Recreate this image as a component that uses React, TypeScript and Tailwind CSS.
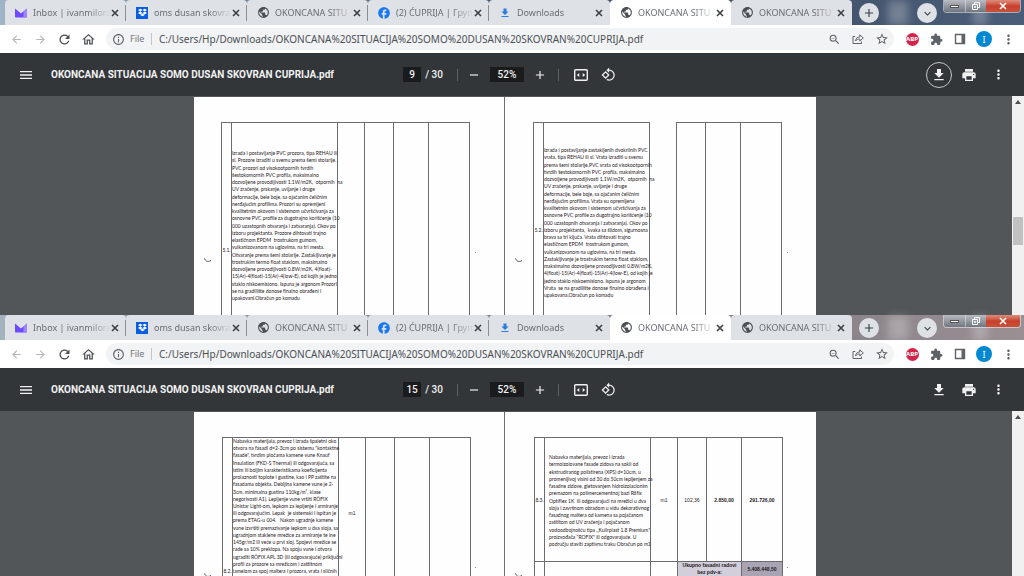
import { useId, useState } from "react";
import type { ReactNode } from "react";
import clsx from "clsx";
import { FaDropbox } from "react-icons/fa";
import {
  MdAdd,
  MdArrowBack,
  MdArrowForward,
  MdFacebook,
  MdInfoOutline,
  MdKeyboardArrowDown,
  MdMenu,
  MdMoreVert,
  MdOutlineHome,
  MdRefresh,
  MdRemove,
  MdRotate90DegreesCcw,
  MdStarBorder,
  MdZoomOut,
} from "react-icons/md";

const FILE_NAME = "OKONCANA SITUACIJA SOMO DUSAN SKOVRAN CUPRIJA.pdf";
const FILE_URL = "C:/Users/Hp/Downloads/" + FILE_NAME.replaceAll(" ", "%20");

const TABS = [
  { icon: "mail", title: "Inbox | ivanmilora" },
  { icon: "dropbox", title: "oms dusan skovra" },
  { icon: "globe", title: "OKONCANA SITU" },
  { icon: "facebook", title: "(2) ĆUPRIJA | Груп" },
  { icon: "download", title: "Downloads" },
  { icon: "globe", title: "OKONCANA SITU" },
  { icon: "globe", title: "OKONCANA SITU" },
];
const ACTIVE_TAB = 5;

const WINDOWS_LINES = [
  "Izrada i postavljanje PVC prozora, tipa REHAU ili",
  "sl. Prozore izraditi u svemu prema šemi stolarije.",
  "PVC prozori od visokootpornih tvrdih",
  "šestokomornih PVC profila, maksimalno",
  "dozvoljene provodljivosti 1.1W/m2K,  otpornih  na",
  "UV zračenje, prskanje, uvijanje i druge",
  "deformacije, bele boje, sa ojačanim čeličnim",
  "nerđajućim profilima. Prozori su opremljeni",
  "kvalitetnim okovom i sistemom učvršćivanja za",
  "osnovne PVC profile za dugotrajno korišćenje (10",
  "000 uzastopnih otvaranja i zatvaranja). Okov po",
  "izboru projektanta. Prozore dihtovati trajno",
  "elastičnom EPDM  trostrukom gumom,",
  "vulkanizovanom na uglovima, na tri mesta.",
  "Otvaranje prema šemi stolarije. Zastakljivanje je",
  "trostrukim termo float staklom, maksimalno",
  "dozvoljene provodljivosti 0.8W/m2K, 4(float)-",
  "15(Ar)-4(float)-15(Ar)-4(low-E), od kojih je jedno",
  "staklo niskoemisiono. Ispuna je argonom Prozori",
  "se na gradilište donose finalno obrađeni i",
  "upakovani.Obračun po komadu",
];

const DOORS_LINES = [
  "Izrada i postavljanje zastakljenih dvokrilnih PVC",
  "vrata, tipa REHAU ili sl. Vrata izraditi u svemu",
  "prema šemi stolarije.PVC vrata od visokootpornih",
  "tvrdih šestokomornih PVC profila, maksimalno",
  "dozvoljene provodljivosti 1.1W/m2K,  otpornih  na",
  "UV zračenje, prskanje, uvijanje i druge",
  "deformacije, bele boje, sa ojačanim čeličnim",
  "nerđajućim profilima. Vrata su opremljena",
  "kvalitetnim okovom i sistemom učvršćivanja za",
  "osnovne PVC profile za dugotrajno korišćenje (10",
  "000 uzastopnih otvaranja i zatvaranja). Okov po",
  "izboru projektanta,  kvaka sa šildom, sigurnosna",
  "brava sa tri ključa. Vrata dihtovati trajno",
  "elastičnom EPDM  trostrukom gumom,",
  "vulkanizovanom na uglovima, na tri mesta.",
  "Zastakljivanje je trostrukim termo float staklom,",
  "maksimalno dozvoljene provodljivosti 0.8W/m2K,",
  "4(float)-15(Ar)-4(float)-15(Ar)-4(low-E), od kojih je",
  "jedno staklo niskoemisiono. Ispuna je argonom",
  "Vrata  se na gradilište donose finalno obrađena i",
  "upakovana.Obračun po komadu",
];

const FACADE_LINES = [
  "Nabavka materijala, prevoz i izrada špaletni oko",
  "otvora na fasadi d=2-3cm po sistemu \"kontaktne",
  "fasade\", tvrdim pločama kamene vune Knauf",
  "Insulation (FKD-S Thermal) ili odgovarajuća, sa",
  "istim ili boljim karakteristikama koeficijenta",
  "prolaznosti toplote i gustine, kao i PP zaštite na",
  "fasadama objekta. Debljina kamene vune je 2-",
  "3cm, minimalna gustina 110kg/m³, klase",
  "negorivosti A1). Lepljenje vune vršiti RÖFIX",
  "Unistar Light-om, lepkom za lepljenje i armiranje",
  "ili odgovarajućim. Lepak  je sistemski i ispitan je",
  "prema ETAG-u 004.   Nakon ugradnje kamene",
  "vune izvršiti premazivanje lepkom u dva sloja, sa",
  "ugradnjom staklene mrežice za armiranje te ine",
  "145gr/m2 ili veće u prvi sloj. Spojevi mrežice se",
  "rade sa 10% preklopa. Na spoju vune i otvora",
  "ugraditi RÖFIX APL 3D (ili odgovarajuće) priključni",
  "profil za prozore sa mrežicom i zaštitnom",
  "lamelom za spoj maltera i prozora, vrata i sličnih",
];

const PLINTH_LINES = [
  "Nabavka materijala, prevoz i izrada",
  "termoizolovane fasade zidova na sokli od",
  "ekstrudiranog polistirena (XPS) d=10cm, u",
  "promenljivoj visini od 30 do 50cm lepljenjem za",
  "fasadne zidove, gletovanjem hidroizolacionim",
  "premazom na polimercementnoj bazi Röfix",
  "Optiflex 1K  ili odgovarajući na mrežici u dva",
  "sloja i završnom obradom u vidu dekorativnog",
  "fasadnog maltera od kamena sa pojačanom",
  "zaštitom od UV zračenja i pojačanom",
  "vodoodbojnošću tipa ,,Kulirplast 1.8 Premium\"",
  "proizvođača \"ROFIX\" ili odgovarajuće. U",
  "području staviti zaptivnu traku Obračun po m1",
];

function Glyph({ d, className }: { d: string; className: string }) {
  return (
    <svg viewBox="0 0 24 24" className={className} fill="currentColor">
      <path d={d} />
    </svg>
  );
}

const DOWNLOAD = "M19 9h-4V3H9v6H5l7 7 7-7zM5 18v2h14v-2H5z";
const PRINT =
  "M19 8H5c-1.66 0-3 1.34-3 3v6h4v4h12v-4h4v-6c0-1.66-1.34-3-3-3zm-3 11H8v-5h8v5zm3-7c-.55 0-1-.45-1-1s.45-1 1-1 1 .45 1 1-.45 1-1 1zm-1-9H6v4h12V3z";
const PUZZLE =
  "M20.5 11H19V7c0-1.1-.9-2-2-2h-4V3.5C13 2.12 11.88 1 10.5 1S8 2.12 8 3.5V5H4c-1.1 0-1.99.9-1.99 2v3.8H3.5c1.49 0 2.7 1.21 2.7 2.7s-1.21 2.7-2.7 2.7H2V20c0 1.1.9 2 2 2h3.8v-1.5c0-1.49 1.21-2.7 2.7-2.7 1.49 0 2.7 1.21 2.7 2.7V22H17c1.1 0 2-.9 2-2v-4h1.5c1.38 0 2.5-1.12 2.5-2.5S21.88 11 20.5 11z";
const GLOBE =
  "M12 2C6.48 2 2 6.48 2 12s4.48 10 10 10 10-4.48 10-10S17.52 2 12 2zm-1 17.93c-3.95-.49-7-3.85-7-7.93 0-.62.08-1.21.21-1.79L9 15v1c0 1.1.9 2 2 2v1.93zm6.9-2.54c-.26-.81-1-1.39-1.9-1.39h-1v-3c0-.55-.45-1-1-1H8v-2h2c.55 0 1-.45 1-1V7h2c1.1 0 2-.9 2-2v-.41c2.93 1.19 5 4.06 5 7.41 0 2.08-.8 3.97-2.1 5.39z";

function CrossIcon({ className }: { className?: string }) {
  return (
    <svg viewBox="0 0 8 8" className={clsx("size-2", className)} fill="none" stroke="currentColor" strokeWidth="1.6">
      <path d="M1 1l6 6M7 1 1 7" />
    </svg>
  );
}

function MailIcon() {
  return (
    <svg viewBox="0 0 12 12" className="size-3">
      <path d="M0 1.5 6 6.5 12 1.5V9.5a1 1 0 0 1-1 1H1a1 1 0 0 1-1-1Z" fill="#6d4aff" />
      <path d="M8.5 4.4 12 1.5V9.5a1 1 0 0 1-1 1H8.5Z" fill="#9b86ff" />
    </svg>
  );
}

function TabIcon({ name }: { name: string }) {
  if (name === "mail") return <MailIcon />;
  if (name === "dropbox") {
    return (
      <span className="flex size-3 items-center justify-center bg-[#0a5fe0] text-white">
        <FaDropbox size={9} />
      </span>
    );
  }
  if (name === "facebook") return <MdFacebook size={14} className="-mx-px text-[#1877f2]" />;
  if (name === "download") return <Glyph d={DOWNLOAD} className="size-3 text-[#2b7de1]" />;
  return <Glyph d={GLOBE} className="size-[13px] text-[#4c4f54]" />;
}

function ShareIcon() {
  return (
    <svg viewBox="0 0 12 12" className="size-3" fill="none" stroke="currentColor">
      <path d="M3.2 3.5H1v7h8.5V8.5" />
      <path d="M3.5 8c.3-2.6 1.8-4 4.3-4V1.8L11.3 5 7.8 8V6C6 6 4.6 6.5 3.5 8Z" strokeLinejoin="round" />
    </svg>
  );
}

function SidePanelIcon() {
  return (
    <svg viewBox="0 0 12 12" className="size-3">
      <path d="M1.5 1.5h9v9h-9z" fill="none" stroke="#5f6368" strokeWidth="1.4" />
      <path d="M7.5 1.5h3v9h-3z" fill="#5f6368" />
    </svg>
  );
}

function FitPageIcon() {
  return (
    <svg viewBox="0 0 14 12" className="h-3 w-3.5">
      <rect x="0.7" y="0.7" width="12.6" height="10.6" rx="1" fill="none" stroke="currentColor" strokeWidth="1.4" />
      <path d="M5.3 4v4L2.8 6ZM8.7 4v4l2.5-2Z" fill="currentColor" />
    </svg>
  );
}

function IconButton({ label, className, children }: { label: string; className?: string; children: ReactNode }) {
  return (
    <button
      aria-label={label}
      className={clsx("flex shrink-0 items-center justify-center", className ?? "size-6")}
    >
      {children}
    </button>
  );
}

function WindowButtons() {
  return (
    <div className="absolute top-0 right-[3px] flex h-[13px] w-[78px] overflow-hidden rounded-b border border-t-0 border-white/50">
      <button
        aria-label="Minimize"
        className="flex w-[22px] items-center justify-center border-r border-white/40 bg-linear-to-b from-[#b9bcc2] to-[#72767e]"
      >
        <span className="h-[3px] w-[9px] border border-[#555] bg-white" />
      </button>
      <button
        aria-label="Restore"
        className="flex w-5 items-center justify-center bg-linear-to-b from-[#b9bcc2] to-[#72767e]"
      >
        <svg viewBox="0 0 10 10" className="size-2.5" fill="none" stroke="#fff">
          <path d="M3.5 3V1.5h5v5H7" />
          <path d="M1.5 3.5h5v5h-5zM3.5 5.5h1v1h-1z" />
        </svg>
      </button>
      <button
        aria-label="Close window"
        className="flex flex-1 items-center justify-center bg-linear-to-b from-[#dc8d7e] via-[#c8402c] to-[#c9503a] text-white"
      >
        <CrossIcon />
      </button>
    </div>
  );
}

function TabStrip({ dark }: { dark?: boolean }) {
  return (
    <div
      className={clsx(
        "relative flex h-[25px] shrink-0 pl-[5px]",
        dark
          ? "bg-linear-to-r from-[#a3b3bd] from-0% via-[#77747b] via-60% to-[#9a9094]"
          : "bg-linear-to-r from-[#9fb4c4] from-0% via-[#3d4a60] via-60% to-[#4a5d78]",
      )}
    >
      <div role="tablist" className="flex">
        {TABS.map((tab, i) => {
          const active = i === ACTIVE_TAB;
          return (
            <div
              key={i}
              role="tab"
              aria-selected={active}
              className={clsx(
                "flex w-[121px] items-center rounded-t-[4px] pl-2.5",
                active ? "bg-white" : "bg-[#dee1e6]",
              )}
            >
              <span className="flex w-[18px] shrink-0 items-center">
                <TabIcon name={tab.icon} />
              </span>
              <span className="flex-1 overflow-hidden text-[9px] leading-3 whitespace-nowrap text-[#6a6d72] [mask-image:linear-gradient(to_right,black_70%,transparent)]">
                {tab.title}
              </span>
              <button aria-label="Close tab" className="text-[#3c4043]">
                <CrossIcon />
              </button>
              <span className={clsx("ml-1.5 h-4 w-px", i < ACTIVE_TAB - 1 && "bg-[#8b8e93]")} />
            </div>
          );
        })}
      </div>
      <div className="flex flex-1 items-center pt-px pl-[7px]">
        <button
          aria-label="New tab"
          className="flex size-5 items-center justify-center rounded-full bg-[#dee1e6] text-[#3c4043]"
        >
          <MdAdd size={14} />
        </button>
        <span className="mx-[9px] h-full w-5 bg-white/25 blur-[4px]" />
        <button
          aria-label="Search tabs"
          className="flex size-5 items-center justify-center rounded-full bg-[#dee1e6] text-[#3c4043]"
        >
          <MdKeyboardArrowDown size={13} />
        </button>
        <span className="ml-9 h-full w-3.5 bg-white/25 blur-[4px]" />
      </div>
      <WindowButtons />
    </div>
  );
}

function AddressBar() {
  const [url, setUrl] = useState(FILE_URL);
  const urlId = useId();

  return (
    <div className="flex h-7 shrink-0 items-center bg-white px-1 text-[#5f6368]">
      <IconButton label="Back" className="size-6 text-[#b4b6b9]">
        <MdArrowBack size={13} />
      </IconButton>
      <IconButton label="Forward" className="size-6 text-[#b4b6b9]">
        <MdArrowForward size={13} />
      </IconButton>
      <IconButton label="Reload" className="size-6 text-[#4c4f54]">
        <MdRefresh size={15} />
      </IconButton>
      <IconButton label="Home" className="size-6 text-[#4c4f54]">
        <MdOutlineHome size={15} />
      </IconButton>

      <div className="ml-1.5 flex h-[22px] flex-1 items-center rounded-full bg-[#f1f3f4] pl-1.5">
        <MdInfoOutline size={13} />
        <label
          htmlFor={urlId}
          className="ml-[5px] w-[22px] border-r border-[#c3c5c8] text-[9px] leading-3 text-[#75787d]"
        >
          File
        </label>
        <input
          id={urlId}
          value={url}
          onChange={(e) => setUrl(e.target.value)}
          className="ml-[7px] min-w-0 flex-1 bg-transparent text-[10px] text-[#4c4f54] outline-none"
        />
        <IconButton label="Zoom">
          <MdZoomOut size={13} />
        </IconButton>
        <IconButton label="Share">
          <ShareIcon />
        </IconButton>
        <IconButton label="Bookmark">
          <MdStarBorder size={14} />
        </IconButton>
      </div>

      <IconButton label="AdBlock Plus" className="ml-1.5 size-6">
        <span className="flex size-[13px] items-center justify-center rounded-full bg-[#d5244a] text-[6px] leading-none font-bold text-white">
          ABP
        </span>
      </IconButton>
      <IconButton label="Extensions">
        <Glyph d={PUZZLE} className="size-[13px]" />
      </IconButton>
      <IconButton label="Side panel">
        <SidePanelIcon />
      </IconButton>
      <IconButton label="Profile">
        <span className="flex size-4 items-center justify-center rounded-full bg-[#0288d1] text-[9px] leading-none text-white">
          I
        </span>
      </IconButton>
      <IconButton label="Menu">
        <MdMoreVert size={15} />
      </IconButton>
    </div>
  );
}

function PdfToolbar({ startPage, downloadFocused }: { startPage: string; downloadFocused?: boolean }) {
  const [page, setPage] = useState(startPage);
  const [zoom, setZoom] = useState("52%");

  return (
    <div className="flex h-[43px] shrink-0 items-center bg-[#323639] pr-3.5 font-[Roboto,sans-serif] text-[#f1f1f1]">
      <div className="flex flex-1 items-center pl-3.5">
        <IconButton label="Menu">
          <MdMenu size={16} />
        </IconButton>
        <h1 className="ml-[13px] text-[10px] font-bold whitespace-nowrap">{FILE_NAME}</h1>
      </div>

      <div className="flex items-center text-[10px] font-medium">
        <input
          aria-label="Page number"
          value={page}
          onChange={(e) => setPage(e.target.value)}
          className="h-[15px] w-[18px] bg-[#191b1c] text-center outline-none"
        />
        <span className="ml-1">/ 30</span>
        <span className="ml-3.5 h-3 w-px bg-[#5f6368]" />
        <IconButton label="Zoom out" className="ml-1 size-6">
          <MdRemove size={14} />
        </IconButton>
        <input
          aria-label="Zoom level"
          value={zoom}
          onChange={(e) => setZoom(e.target.value)}
          className="ml-1 h-[15px] w-[34px] bg-[#191b1c] text-center outline-none"
        />
        <IconButton label="Zoom in" className="ml-1 size-6">
          <MdAdd size={14} />
        </IconButton>
        <span className="ml-1.5 h-3 w-px bg-[#5f6368]" />
        <IconButton label="Fit to page" className="ml-2.5 size-6">
          <FitPageIcon />
        </IconButton>
        <IconButton label="Rotate" className="ml-1 size-6">
          <MdRotate90DegreesCcw size={15} />
        </IconButton>
      </div>

      <div className="flex flex-1 items-center justify-end gap-[5px]">
        <IconButton
          label="Download"
          className={clsx("size-[26px]", downloadFocused && "rounded-full border border-[#c4c7ca]")}
        >
          <Glyph d={DOWNLOAD} className="size-4" />
        </IconButton>
        <IconButton label="Print">
          <Glyph d={PRINT} className="size-4" />
        </IconButton>
        <IconButton label="More">
          <MdMoreVert size={15} />
        </IconButton>
      </div>
    </div>
  );
}

/* Column grid shared by all scanned sheets: no., description, unit, qty, price, total */
function SheetColumns() {
  return (
    <colgroup>
      <col className="w-2.5" />
      <col className="w-[106px]" />
      <col className="w-[27px]" />
      <col className="w-[29px]" />
      <col className="w-[35px]" />
      <col className="w-[41px]" />
    </colgroup>
  );
}

function Description({ lines, className }: { lines: string[]; className: string }) {
  return (
    <div className={clsx("flex flex-col justify-between", className)}>
      {lines.map((line) => (
        <p key={line} className="text-[5px] leading-[7px] whitespace-pre">
          {line}
        </p>
      ))}
    </div>
  );
}

type SheetProps = {
  className: string;
  no: string;
  noClass: string;
  rowClass: string;
  textClass: string;
  lines: string[];
  values?: string[];
  valueClass?: string;
  gap?: boolean;
  total?: boolean;
};

function Sheet({ className, no, noClass, rowClass, textClass, lines, values = [], valueClass, gap, total }: SheetProps) {
  const cell = "border border-[#6b6c70] p-0";

  return (
    <div className={clsx("relative flex-1 overflow-hidden bg-[#fefefe]", className)}>
      <table className="w-[249px] table-fixed border-collapse font-[Lato,'Liberation_Sans',sans-serif] text-[#1f2023] [font-variant-ligatures:none]">
        <SheetColumns />
        <tbody>
          <tr className={rowClass}>
            <td className={clsx(cell, "text-center align-top text-[5px] leading-[7px]", noClass)}>{no}</td>
            <td className={clsx(cell, "align-top")}>
              <Description lines={lines} className={textClass} />
            </td>
            {[0, 1, 2, 3].map((i) => (
              <td
                key={i}
                className={clsx(
                  gap && i === 0 ? "border-x border-[#6b6c70] p-0" : cell,
                  "text-center align-top font-['Liberation_Sans',sans-serif] text-[5px] leading-[7px]",
                  valueClass,
                  i > 1 && "font-bold",
                )}
              >
                {values[i]}
              </td>
            ))}
          </tr>
          {total && (
            <tr className="h-[14px]">
              <td className={cell} />
              <td className={cell} />
              <td className={cell} />
              <td
                colSpan={2}
                className={clsx(cell, "bg-[#d3cfda] text-center font-['Liberation_Sans',sans-serif] text-[5px] leading-[7px] font-bold")}
              >
                Ukupno fasadni radovi
                <br />
                bez pdv-a:
              </td>
              <td className={clsx(cell, "bg-[#a9a4b3] text-center font-['Liberation_Sans',sans-serif] text-[5px] leading-[7px] font-bold")}>
                5.408.448,50
              </td>
            </tr>
          )}
        </tbody>
      </table>
      <PenMark />
    </div>
  );
}

/* Pen stroke in the left margin and a speck in the right one */
function PenMark() {
  return (
    <>
      <svg viewBox="0 0 8 5" className="absolute top-[161px] left-2.5 h-[5px] w-2" fill="none" stroke="#4c4f54">
        <path d="M.5.5C1.5 3 3.5 4.5 7 2.5" />
      </svg>
      <span className="absolute top-[155px] right-7 size-px bg-[#8b8e93]" />
    </>
  );
}

function Viewer({ thumb, children }: { thumb?: boolean; children: ReactNode }) {
  return (
    <div className="flex min-h-0 flex-1 overflow-hidden bg-[#525659]">
      <div className="flex flex-1 justify-center pt-px pr-0.5">
        <div className="flex w-[622px] divide-x divide-[#6b6d71]">{children}</div>
      </div>
      <div className="flex w-3 flex-col items-center bg-[#f1f1f1]">
        <svg viewBox="0 0 6 4" className="mt-1 h-1 w-1.5">
          <path d="M0 4 3 0l3 4Z" fill="#4c4f54" />
        </svg>
        {thumb && <div className="mt-[113px] h-7 w-2.5 bg-[#c1c1c1]" />}
      </div>
    </div>
  );
}

export default function App() {
  return (
    <div className="flex h-screen flex-col overflow-hidden font-['Noto_Sans','Open_Sans',sans-serif]">
      <section className="flex h-[315px] shrink-0 flex-col">
        <TabStrip />
        <AddressBar />
        <PdfToolbar startPage="9" downloadFocused />
        <Viewer thumb>
          <Sheet
            className="pt-[25px] pl-[27px]"
            no="5.1."
            noClass="pt-[124px]"
            rowClass="h-[240px]"
            textClass="mt-[27px] h-[152px]"
            lines={WINDOWS_LINES}
          />
          <Sheet
            className="pt-[25px] pl-7"
            no="5.2."
            noClass="pt-[104px]"
            rowClass="h-[240px]"
            textClass="mt-6 h-[152px]"
            lines={DOORS_LINES}
            gap
          />
        </Viewer>
      </section>

      <section className="flex min-h-0 flex-1 flex-col">
        <TabStrip dark />
        <AddressBar />
        <PdfToolbar startPage="15" />
        <Viewer>
          <Sheet
            className="pt-[25px] pl-7"
            no="8.2."
            noClass="pt-[130px]"
            rowClass="h-[240px]"
            textClass="h-[137px]"
            lines={FACADE_LINES}
            values={["m1"]}
            valueClass="pt-[72px]"
          />
          <Sheet
            className="pt-[25px] pl-[29px]"
            no="8.3."
            noClass="pt-[59px]"
            rowClass="h-[124px]"
            textClass="mt-4 ml-1 h-[94px]"
            lines={PLINTH_LINES}
            values={["m1", "102,36", "2.850,00", "291.726,00"]}
            valueClass="pt-[59px]"
            total
          />
        </Viewer>
      </section>
    </div>
  );
}
